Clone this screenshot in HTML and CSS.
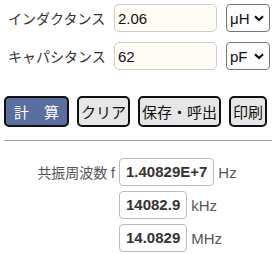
FILE: index.html
```html
<!DOCTYPE html>
<html lang="ja">
<head>
    <meta charset="UTF-8">
    <title>共振周波数計算</title>
    <link rel="stylesheet" href="styles.css">
</head>
<body>
    <form class="calc" autocomplete="off">
        <div class="row">
            <label for="ind">インダクタンス</label>
            <input type="text" id="ind" class="value" value="2.06">
            <span class="unit-select">
                <select id="indUnit">
                    <option>μH</option>
                    <option>mH</option>
                    <option>H</option>
                </select>
                <svg class="chev" width="10" height="7" viewBox="0 0 10 7"><path d="M1 1.2 L5 5 L9 1.2" fill="none" stroke="#111" stroke-width="2.2"/></svg>
            </span>
        </div>
        <div class="row">
            <label for="cap">キャパシタンス</label>
            <input type="text" id="cap" class="value" value="62">
            <span class="unit-select">
                <select id="capUnit">
                    <option>pF</option>
                    <option>nF</option>
                    <option>μF</option>
                </select>
                <svg class="chev" width="10" height="7" viewBox="0 0 10 7"><path d="M1 1.2 L5 5 L9 1.2" fill="none" stroke="#111" stroke-width="2.2"/></svg>
            </span>
        </div>
        <div class="buttons">
            <button type="button" class="btn primary">計　算</button>
            <button type="button" class="btn">クリア</button>
            <button type="button" class="btn">保存・呼出</button>
            <button type="button" class="btn">印刷</button>
        </div>
    </form>
    <hr class="divider">
    <div class="results">
        <div class="res-row">
            <span class="res-label">共振周波数 f</span>
            <span class="res-box">1.40829E+7</span>
            <span class="res-unit">Hz</span>
        </div>
        <div class="res-row">
            <span class="res-label"></span>
            <span class="res-box">14082.9</span>
            <span class="res-unit">kHz</span>
        </div>
        <div class="res-row">
            <span class="res-label"></span>
            <span class="res-box">14.0829</span>
            <span class="res-unit">MHz</span>
        </div>
    </div>
</body>
</html>
```

FILE: styles.css
```css
html, body
{
    margin: 0;
    padding: 0;
}
body
{
    padding: 4px 0 0 4px;
    background: #fff;
    color: #333;
    font-family: 'Liberation Sans', 'Noto Sans CJK JP', sans-serif;
}
.row
{
    display: flex;
    align-items: center;
    height: 28px;
    margin-bottom: 10px;
}
.row label
{
    width: 106px;
    padding-left: 4px;
    font-size: 14px;
    color: #333;
    white-space: nowrap;
}
.value
{
    box-sizing: border-box;
    width: 103px;
    height: 28px;
    padding: 0 3px;
    border: 1px solid #ccc;
    border-radius: 5px;
    background: #fffcf5;
    font-family: 'Liberation Sans', sans-serif;
    font-size: 15px;
    color: #111;
}
.unit-select
{
    position: relative;
    margin-left: 9px;
}
.unit-select select
{
    appearance: none;
    -webkit-appearance: none;
    box-sizing: border-box;
    width: 44px;
    height: 28px;
    padding: 0 0 0 3px;
    border: 1px solid #767676;
    border-radius: 4px;
    background: #fdfdfd;
    font-family: 'Liberation Sans', sans-serif;
    font-size: 15px;
    color: #111;
}
.chev
{
    position: absolute;
    right: 6px;
    top: 11px;
    pointer-events: none;
}
.buttons
{
    display: flex;
    gap: 8px;
    margin-top: 26px;
}
.btn
{
    box-sizing: border-box;
    height: 31px;
    padding: 0 2px;
    border: 2px solid #111;
    border-radius: 5px;
    background: #e6e6e6;
    font-family: 'Noto Sans CJK JP', sans-serif;
    font-size: 15px;
    color: #111;
    cursor: pointer;
}
.btn.primary
{
    width: 65px;
    background: #5a6ea2;
    color: #fff;
}
.divider
{
    margin: 13px 0 0 0;
    border: none;
    border-top: 1px solid #a0a0a0;
}
.results
{
    display: flex;
    flex-direction: column;
    gap: 5px;
    margin-top: 17px;
}
.res-row
{
    display: flex;
    align-items: center;
    gap: 4px;
}
.res-label
{
    width: 111px;
    text-align: right;
    font-size: 14px;
    color: #555;
    white-space: nowrap;
}
.res-box
{
    box-sizing: border-box;
    height: 28px;
    line-height: 26px;
    padding: 0 6px;
    border: 1px solid #bbb;
    border-radius: 4px;
    font-size: 15px;
    font-weight: bold;
    color: #333;
}
.res-unit
{
    font-size: 15px;
    color: #555;
}
```
